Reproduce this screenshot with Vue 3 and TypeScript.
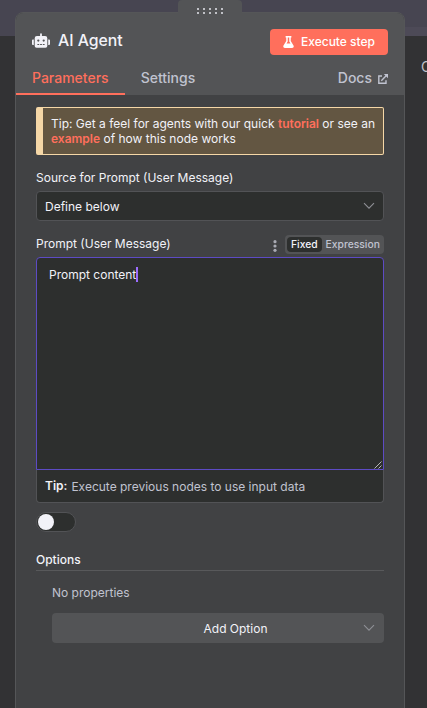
<script setup lang="ts">
import { ref } from 'vue'

type Mode = 'Fixed' | 'Expression'

const tabs = ['Parameters', 'Settings']
const activeTab = ref('Parameters')
const modes: Mode[] = ['Fixed', 'Expression']
const mode = ref<Mode>('Fixed')
const prompt = ref('Prompt content')
const enabled = ref(false)
</script>

<template>
  <div class="screen">
    <div class="canvas-strip"></div>
    <div class="output-strip"></div>
    <span class="output-title">O</span>

    <main class="panel">
      <header class="header">
        <div class="title-row">
          <svg class="robot" viewBox="0 0 640 512" fill="#f2f2f8">
            <path d="M32,224H64V416H32A32,32,0,0,1,0,384V256A32,32,0,0,1,32,224Zm512-48V448a64,64,0,0,1-64,64H160a64,64,0,0,1-64-64V176a80,80,0,0,1,80-80H288V32a32,32,0,0,1,64,0V96H464A80,80,0,0,1,544,176ZM264,256a40,40,0,1,0-40,40A40,40,0,0,0,264,256Zm-8,128H192v32h64Zm96,0H288v32h64ZM456,256a40,40,0,1,0-40,40A40,40,0,0,0,456,256Zm-8,128H384v32h64ZM640,256V384a32,32,0,0,1-32,32H576V224h32A32,32,0,0,1,640,256Z" />
          </svg>
          <h1>AI Agent</h1>
          <button class="execute">
            <svg width="11" height="12" viewBox="0 0 448 512" fill="#fff">
              <path d="M437.2 403.5L320 215V64h8c13.3 0 24-10.7 24-24V24c0-13.3-10.7-24-24-24H120c-13.3 0-24 10.7-24 24v16c0 13.3 10.7 24 24 24h8v151L10.8 403.5C-18.5 450.6 15.3 512 70.9 512h306.2c55.7 0 89.4-61.5 60.1-108.5zM137.9 320l48.2-77.6c3.7-5.2 5.8-11.6 5.8-18.4V64h64v160c0 6.9 2.2 13.2 5.8 18.4l48.2 77.6h-172z" />
            </svg>
            <span>Execute step</span>
          </button>
        </div>
        <nav class="tabs">
          <a v-for="tab in tabs" :key="tab" class="tab" :class="{ active: tab === activeTab }" @click="activeTab = tab">{{ tab }}</a>
          <a class="docs">Docs
            <svg width="10" height="10" viewBox="0 0 10 10" fill="none" stroke="currentColor" stroke-width="1.4">
              <path d="M4 2H.8V9.2H8V6.2M3.3 6.7L8.4 1.6" />
              <path d="M5.800 0H10V4.200Z" fill="currentColor" stroke="none" />
            </svg>
          </a>
        </nav>
      </header>

      <section class="body">
        <div class="notice">Tip: Get a feel for agents with our quick <b>tutorial</b> or see an <b>example</b> of how this node works</div>

        <div class="label source-label">Source for Prompt (User Message)</div>
        <div class="select">
          <span>Define below</span>
          <svg class="chevron" viewBox="0 0 12 8"><path d="M1 1.200L6 6.200L11 1.200" /></svg>
        </div>

        <div class="prompt-head">
          <span class="label">Prompt (User Message)</span>
          <svg class="dots" width="4" height="12" viewBox="0 0 4 12" fill="#a9aab3">
            <circle cx="2" cy="1.700" r="1.600" /><circle cx="2" cy="6" r="1.600" /><circle cx="2" cy="10.300" r="1.600" />
          </svg>
          <div class="modes">
            <span v-for="m in modes" :key="m" class="mode" :class="{ on: m === mode }" @click="mode = m">{{ m }}</span>
          </div>
        </div>
        <div class="editor">
          <span>{{ prompt }}</span><i class="caret"></i>
          <svg class="resize" width="8" height="8" viewBox="0 0 8 8" fill="none" stroke="#c8c8c8" stroke-width=".9">
            <path d="M.500 7.500L7.500.500M4.500 7.500L7.500 4.500" />
          </svg>
        </div>
        <div class="hint"><strong>Tip:</strong><span>Execute previous nodes to use input data</span></div>

        <div class="toggle" :class="{ enabled }" @click="enabled = !enabled"><i></i></div>

        <h2>Options</h2>
        <div class="options">
          <p>No properties</p>
          <div class="add">
            <span>Add Option</span>
            <svg class="chevron" viewBox="0 0 12 8"><path d="M1 1.200L6 6.200L11 1.200" /></svg>
          </div>
        </div>
      </section>
    </main>

    <div class="drag-handle">
      <svg width="28" height="6" viewBox="0 0 28 6" fill="#c0c1c6">
        <template v-for="c in 5" :key="c">
          <rect :x="(c - 1) * 6" y="0" width="2" height="2" />
          <rect :x="(c - 1) * 6" y="4" width="2" height="2" />
        </template>
      </svg>
    </div>
  </div>
</template>

<style>
body {
  margin: 0;
  background: #323234;
}
</style>

<style scoped>
* {
  box-sizing: border-box;
}
.screen {
  position: relative;
  height: 708px;
  padding: 12px 22px 0 15px;
  overflow: hidden;
  background: #323234;
  color: #f2f2f8;
  font-family: Inter, sans-serif;
  font-size: 12px;
}
.canvas-strip {
  position: absolute;
  inset: 0 0 auto;
  height: 36px;
  background: #474551;
}
.output-strip {
  position: absolute;
  top: 27px;
  right: 0;
  width: 30px;
  height: 9px;
  background: #4d4a57;
}
.output-title {
  position: absolute;
  left: 421px;
  top: 59px;
  font-size: 14px;
  line-height: 16px;
  color: #c0c1cb;
}
.drag-handle {
  position: absolute;
  top: 0;
  left: 178px;
  width: 64px;
  height: 15px;
  padding: 8px 0 0 19px;
  border-radius: 4px 4px 0 0;
  background: #535456;
}
.drag-handle svg {
  display: block;
}
.panel {
  position: relative;
  height: 720px;
  border: 1px solid #555658;
  border-radius: 8px 8px 0 0;
  background: #414244;
  overflow: hidden;
}
.header {
  height: 82px;
  padding: 16px 16px 0;
  background: #535456;
}
.title-row {
  display: flex;
  align-items: center;
  height: 26px;
}
.robot {
  width: 18px;
  height: 15px;
  margin-top: -3px;
}
h1 {
  flex: 1;
  margin: -2px 0 0 8px;
  font-size: 15.8px;
  font-weight: 500;
  line-height: 20px;
}
.execute {
  display: flex;
  align-items: center;
  gap: 7px;
  width: 118px;
  height: 26px;
  padding: 0 0 1px 13px;
  border: 0;
  border-radius: 4px;
  background: #ff6f5c;
  color: #fff;
  font: 500 12px/15px Inter, sans-serif;
  white-space: nowrap;
}
.execute span {
  margin-top: -1px;
}
.tabs {
  display: flex;
  height: 40px;
  margin: 0 -16px;
  font-size: 14px;
  font-weight: 500;
  line-height: 18px;
  color: #c0c3d0;
}
.tab {
  padding: 14px 16px 0;
  border-bottom: 2px solid transparent;
}
.tab.active {
  color: #ff6f5c;
  border-color: #ff6f5c;
}
.docs {
  display: flex;
  gap: 6px;
  margin-left: auto;
  padding: 14px 16px 0 0;
}
.docs svg {
  margin-top: 5px;
}
.body {
  padding: 12px 20px 0;
}
.notice {
  height: 48px;
  padding: 8px 0 0 8px;
  border: 1px solid #f5d7a7;
  border-left-width: 7px;
  border-radius: 2px;
  background: #635642;
  line-height: 15px;
}
.notice b {
  color: #ff6f5c;
  font-weight: 600;
}
.label {
  line-height: 16px;
}
.source-label {
  margin-top: 15px;
}
.select {
  display: flex;
  align-items: center;
  justify-content: space-between;
  height: 30px;
  margin-top: 5px;
  padding: 0 8px;
  border: 1px solid #525356;
  border-radius: 4px;
  background: #2d2f2e;
}
.chevron {
  width: 12px;
  height: 8px;
  fill: none;
  stroke: #8e8f95;
  stroke-width: 1.1;
}
.prompt-head {
  display: flex;
  align-items: center;
  height: 19px;
  margin: 14px 0 3px;
}
.prompt-head .label {
  margin-top: -1px;
}
.dots {
  margin: 2px 8px 0 auto;
}
.modes {
  display: flex;
  width: 99px;
  height: 19px;
  padding: 2px;
  border-radius: 4px;
  background: #535456;
  font-size: 10.3px;
  font-weight: 500;
  line-height: 15px;
  color: #c0c3d0;
}
.mode {
  padding: 0 4px;
  border-radius: 4px;
}
.mode.on {
  background: #2d2f2e;
  color: #f2f2f8;
}
.editor {
  position: relative;
  display: flex;
  height: 213px;
  padding: 9px 12px;
  border: 1px solid #5d4bc4;
  border-radius: 4px 4px 0 0;
  background: #2d2f2e;
  line-height: 16px;
}
.caret {
  width: 2px;
  height: 15px;
  background: #9b6dff;
}
.resize {
  position: absolute;
  right: 1px;
  bottom: 0;
}
.hint {
  display: flex;
  align-items: center;
  gap: 4px;
  height: 33px;
  padding: 0 8px;
  border: 1px solid #525356;
  border-top: 0;
  border-radius: 0 0 4px 4px;
  background: #2d2f2e;
  color: #c0c3d0;
}
.hint strong {
  margin-top: -1px;
  font-weight: 600;
  color: #f2f2f8;
}
.toggle {
  display: flex;
  width: 40px;
  height: 20px;
  margin-top: 9px;
  padding: 1px;
  border: 1px solid #525356;
  border-radius: 10px;
  background: #2d2f2e;
}
.toggle i {
  width: 16px;
  height: 16px;
  border-radius: 50%;
  background: #f2f2f8;
}
.toggle.enabled {
  justify-content: flex-end;
}
h2 {
  height: 19px;
  margin: 20px 0 0;
  border-bottom: 1px solid #58595b;
  font-size: 12px;
  font-weight: 500;
  line-height: 16px;
}
.options {
  padding-left: 16px;
}
.options p {
  margin: 14px 0 12px;
  line-height: 16px;
  color: #c0c3d0;
}
.add {
  display: flex;
  align-items: center;
  height: 30px;
  padding: 0 9px 0 56px;
  border-radius: 4px;
  background: #535456;
}
.add span {
  flex: 1;
  text-align: center;
}
</style>
